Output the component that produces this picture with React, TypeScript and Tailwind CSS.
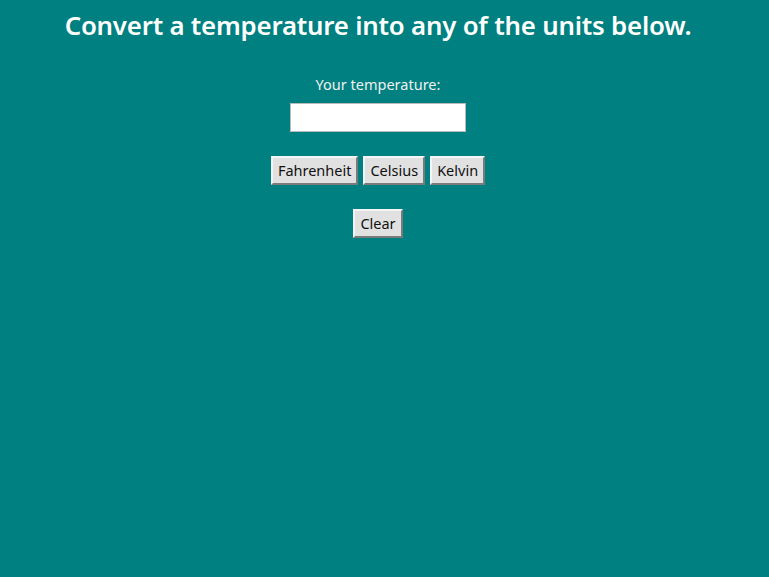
import { useState } from 'react';

const UNITS = ['Fahrenheit', 'Celsius', 'Kelvin'];

const btn =
  'h-[29px] px-[5px] text-[14.5px] text-[#111] bg-[#e1e1e1] border-2 border-t-[#f4f4f4] border-l-[#f4f4f4] border-r-[#7a7a7a] border-b-[#7a7a7a] leading-none';

export default function App() {
  const [temp, setTemp] = useState('');

  return (
    <div
      className="min-h-[577px] w-full bg-[#008080] text-white pr-[13px]"
      style={{ fontFamily: '"Noto Sans", "Open Sans", sans-serif' }}
    >
      <h1 className="pt-[8px] text-center text-[25.8px] font-semibold tracking-[-0.2px] leading-[34px]">
        Convert a temperature into any of the units below.
      </h1>

      <div className="mt-[32px] flex flex-col items-center">
        <label htmlFor="temp" className="text-[14.5px] leading-[20px] text-[#f0f0f0]">
          Your temperature:
        </label>
        <input
          id="temp"
          value={temp}
          onChange={(e) => setTemp(e.target.value)}
          className="mt-[9px] h-[29px] w-[176px] bg-white border border-[#b9b9b9] text-black px-1 outline-none"
        />

        <div className="mt-[24px] flex gap-[5px]">
          {UNITS.map((u) => (
            <button key={u} className={btn}>
              {u}
            </button>
          ))}
        </div>

        <button className={`${btn} mt-[24px]`} onClick={() => setTemp('')}>
          Clear
        </button>
      </div>
    </div>
  );
}
